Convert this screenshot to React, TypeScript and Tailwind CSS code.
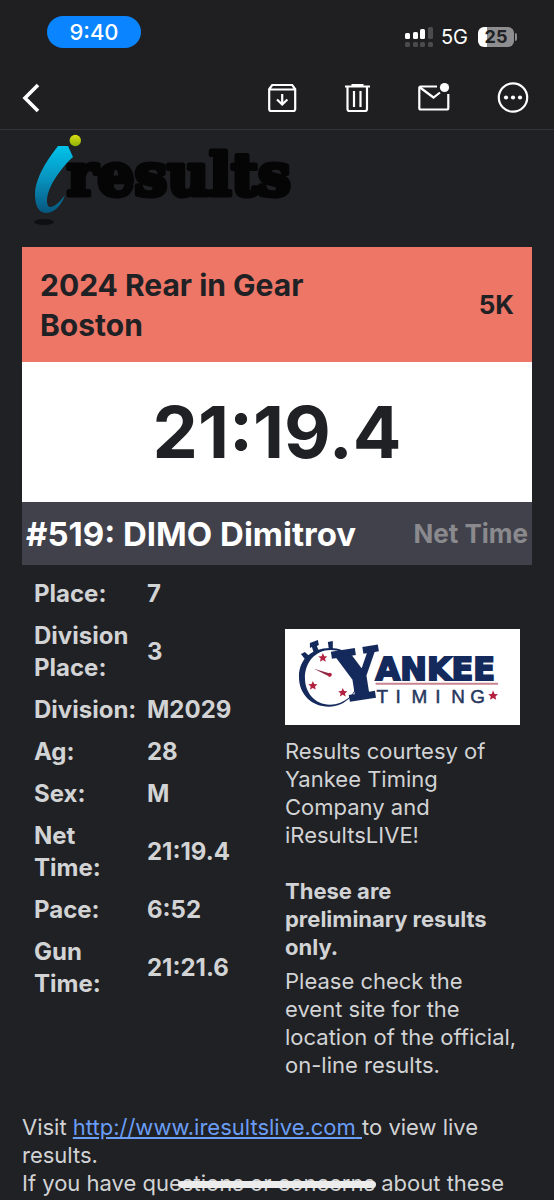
import React from 'react';

const details = [
  { label: 'Place:', value: '7' },
  { label: 'Division Place:', value: '3' },
  { label: 'Division:', value: 'M2029' },
  { label: 'Ag:', value: '28' },
  { label: 'Sex:', value: 'M' },
  { label: 'Net Time:', value: '21:19.4' },
  { label: 'Pace:', value: '6:52' },
  { label: 'Gun Time:', value: '21:21.6' },
];

const StatusBar: React.FC = () => (
  <div className="flex h-16 items-center justify-between bg-[#1f1f21] pl-[47px] pr-[37px]">
    <div className="flex h-8 w-[94px] items-center justify-center rounded-full bg-[#0a84ff] text-[22px] font-medium leading-none text-white">
      9:40
    </div>
    <div className="mt-2.5 flex items-center">
      <svg width="28" height="20" viewBox="0 0 28 20" fill="#fff" aria-hidden="true">
        <rect x="0" y="6" width="5" height="6" rx="1.5" />
        <rect x="8" y="5" width="5" height="7" rx="1.5" />
        <rect x="15" y="2" width="5" height="10" rx="1.5" />
        <g fill="#4b4b4d">
          <rect x="23" y="0" width="5" height="12" rx="1.5" />
          <rect x="0" y="15" width="5" height="5" rx="1.5" />
          <rect x="8" y="15" width="5" height="5" rx="1.5" />
          <rect x="15" y="15" width="5" height="5" rx="1.5" />
          <rect x="23" y="15" width="5" height="5" rx="1.5" />
        </g>
      </svg>
      <span className="ml-2 text-[20px] leading-5 text-white">5G</span>
      <div className="ml-2.5 flex items-center gap-px">
        <div className="flex h-5 w-9 items-center justify-center rounded-md bg-linear-to-r from-white from-25% to-[#8e8e90] to-25% text-[18px] font-bold leading-none text-[#202124]">
          25
        </div>
        <span className="h-2 w-0.5 rounded-r bg-[#8e8e90]" />
      </div>
    </div>
  </div>
);

const Toolbar: React.FC = () => (
  <header className="flex h-[66px] items-center justify-between border-b border-[#343437] bg-[#1f1f21] pl-5 pr-[25px] text-white">
    <button type="button" aria-label="Back">
      <svg width="22" height="32" viewBox="0 0 22 32" fill="none" stroke="currentColor" strokeWidth="3.6">
        <path d="M18 4 5 17l13 13" />
      </svg>
    </button>
    <div className="flex items-center gap-[45px]">
      <button type="button" aria-label="Archive">
        <svg width="30" height="32" viewBox="0 0 30 32" fill="none" stroke="currentColor" strokeWidth="2.2">
          <path d="M1.2 8v20q0 2 2 2h22q2 0 2-2V8l-3-4h-20ZM1.2 8.5h26" />
          <path d="M14.2 13v10M9 18.5l5.2 5 5.2-5" />
        </svg>
      </button>
      <button type="button" aria-label="Delete">
        <svg width="30" height="32" viewBox="0 0 30 32" fill="none" stroke="currentColor" strokeWidth="2.2">
          <path d="M2 5.5h25M8.5 4.2h12M4.5 6v22q0 2 2 2H22q2 0 2-2V6" />
          <path d="M11 10v16M17.5 10v16" />
        </svg>
      </button>
      <button type="button" aria-label="Mark unread">
        <svg width="34" height="32" viewBox="0 0 34 32" fill="none" stroke="currentColor" strokeWidth="2.2">
          <path d="M19 5.5H2.8Q1.3 5.500 1.3 7v20q0 1.500 1.500 1.500h26q1.500 0 1.500-1.500V13" />
          <path d="m2 6.500 13.500 10 6.500-5" />
          <circle cx="26.5" cy="6.5" r="4.6" fill="currentColor" stroke="none" />
        </svg>
      </button>
      <button type="button" aria-label="More">
        <svg width="32" height="32" viewBox="0 0 32 32" fill="none" stroke="currentColor" strokeWidth="2.2">
          <circle cx="16" cy="16.5" r="14.2" />
          <g fill="currentColor" stroke="none">
            <circle cx="9" cy="16.5" r="2.1" />
            <circle cx="16" cy="16.5" r="2.1" />
            <circle cx="23" cy="16.5" r="2.1" />
          </g>
        </svg>
      </button>
    </div>
  </header>
);

const IResultsLogo: React.FC = () => (
  <svg className="ml-3" width="264" height="92" viewBox="0 0 264 92" role="img" aria-label="iresults">
    <defs>
      <linearGradient id="stem" x1="0" y1="0" x2="0" y2="1">
        <stop offset="0" stopColor="#00c3ea" />
        <stop offset="0.5" stopColor="#0891bd" />
        <stop offset="1" stopColor="#06567e" />
      </linearGradient>
      <linearGradient id="dot" x1="0" y1="0" x2="0" y2="1">
        <stop offset="0" stopColor="#dbe014" />
        <stop offset="1" stopColor="#8fae08" />
      </linearGradient>
    </defs>
    <ellipse cx="10" cy="88" rx="10" ry="3" fill="#0e0f11" />
    <text
      x="33"
      y="61"
      fontFamily="'DejaVu Serif', serif"
      fontWeight="700"
      fontSize="58"
      fill="#050506"
      stroke="#050506"
      strokeWidth="5"
      strokeLinejoin="round"
    >
      results
    </text>
    <path
      d="M24 12h10l5 11C29 32 13 52 13 67c0 12 11 4 18-6-4 11-11 18-19 18C4 79 1 70 1 61c0-17 12-35 23-49Z"
      fill="url(#stem)"
    />
    <circle cx="41.3" cy="6.5" r="5.7" fill="url(#dot)" />
  </svg>
);

const Star: React.FC<{ x: number; y: number; size?: number }> = ({ x, y, size = 1 }) => (
  <path
    transform={`translate(${x} ${y}) scale(${size})`}
    d="M0-4 1.1-1.4 3.8-1.2 1.8.6 2.4 3.2 0 1.8-2.4 3.2-1.8.6-3.8-1.2-1.1-1.4Z"
    fill="#b3203f"
  />
);

const YankeeLogo: React.FC = () => (
  <svg className="w-full bg-white" viewBox="0 0 236 96" role="img" aria-label="Yankee Timing">
    <g fill="#152a5c">
      <path d="m25 14 8-3 1 5-2 1 2 5-5 2-2-6-2 1ZM43 13l5-1v9l-4-1ZM16 25l4-2 6 6-4 4Z" />
      <path fillRule="evenodd" d="M45 19c19 0 29 13 29 29S61 78 44 78 14 66 14 48s13-29 31-29Zm1 2C30 21 20 34 20 49s10 27 25 27 28-11 28-27-11-28-27-28Z" />
    </g>
    <path d="m29 40 17 5-1 3Z" fill="#8d2742" />
    <circle cx="45" cy="46" r="2" fill="#b3203f" />
    <Star x={38} y={29} size={1.2} />
    <Star x={28} y={57} size={1.2} />
    <Star x={58} y={64} size={1.2} />
    <text
      transform="translate(56 73) rotate(-9)"
      fontFamily="'DejaVu Serif Condensed', 'DejaVu Serif', serif"
      fontWeight="700"
      fontSize="68"
      fill="#152a5c"
      stroke="#152a5c"
      strokeWidth="3"
    >
      Y
    </text>
    <text
      x="91"
      y="51"
      fontFamily="'DejaVu Sans', sans-serif"
      fontWeight="700"
      fontSize="32"
      fill="#152a5c"
      stroke="#152a5c"
      strokeWidth="2"
    >
      ANKEE
    </text>
    <path d="M91 55h123" stroke="#c98592" strokeWidth="2" />
    <text
      x="92 111 127 151 167 186"
      y="74"
      fontFamily="'Liberation Sans', sans-serif"
      fontSize="19"
      fill="#27375f"
      stroke="#27375f"
      strokeWidth="0.5"
    >
      TIMING
    </text>
    <Star x={209} y={67} size={1.3} />
  </svg>
);

const App: React.FC = () => (
  <div className="min-h-screen bg-[#202124] font-['Inter',sans-serif] text-[#d2d3d5]">
    <StatusBar />
    <Toolbar />
    <main className="px-[22px] pt-1">
      <IResultsLogo />

      <section className="mt-[21px]">
        <div className="flex items-center justify-between bg-[#ed7666] px-[18px] pt-[18px] pb-[17px] font-bold text-[#202124]">
          <h1 className="max-w-[300px] text-[30px] leading-10">2024 Rear in Gear Boston</h1>
          <span className="text-[26px] leading-8">5K</span>
        </div>
        <div className="bg-white py-[30px] text-center text-[72px] font-bold leading-[80px] text-[#202124]">
          21:19.4
        </div>
        <div className="flex h-[63px] items-center justify-between bg-[#41414b] px-1 font-bold">
          <h2 className="text-[33px] leading-10 text-white">#519: DIMO Dimitrov</h2>
          <span className="text-[26px] leading-8 text-[#8a8a8e]">Net Time</span>
        </div>
      </section>

      <section className="grid grid-cols-2">
        <div className="pl-3 pt-2">
          <table className="w-full text-left text-[24px] font-bold leading-8">
            <tbody>
              {details.map((row) => (
                <tr key={row.label}>
                  <th scope="row" className="w-[113px] py-[5px] pr-1 font-bold">
                    {row.label}
                  </th>
                  <td className="py-[5px]">{row.value}</td>
                </tr>
              ))}
            </tbody>
          </table>
        </div>
        <div className="pl-2 pr-3 pt-16 text-[22px] leading-7">
          <YankeeLogo />
          <p className="mt-3">Results courtesy of Yankee Timing Company and iResultsLIVE!</p>
          <p className="mt-7 pr-4 font-bold">These are preliminary results only.</p>
          <p className="mt-1.5">
            Please check the event site for the location of the official, on-line results.
          </p>
        </div>
      </section>

      <footer className="mt-[34px] text-[22px] leading-7">
        <p>
          Visit{' '}
          <a href="http://www.iresultslive.com" className="text-[#6a9df5] underline">
            http://www.iresultslive.com{' '}
          </a>
          to view live results.
        </p>
        <p>If you have questions or concerns about these</p>
      </footer>
    </main>
    {/* home indicator */}
    <div className="fixed inset-x-0 bottom-3 mx-auto h-[7px] w-[198px] rounded-full bg-[#ececec]" />
  </div>
);

export default App;
